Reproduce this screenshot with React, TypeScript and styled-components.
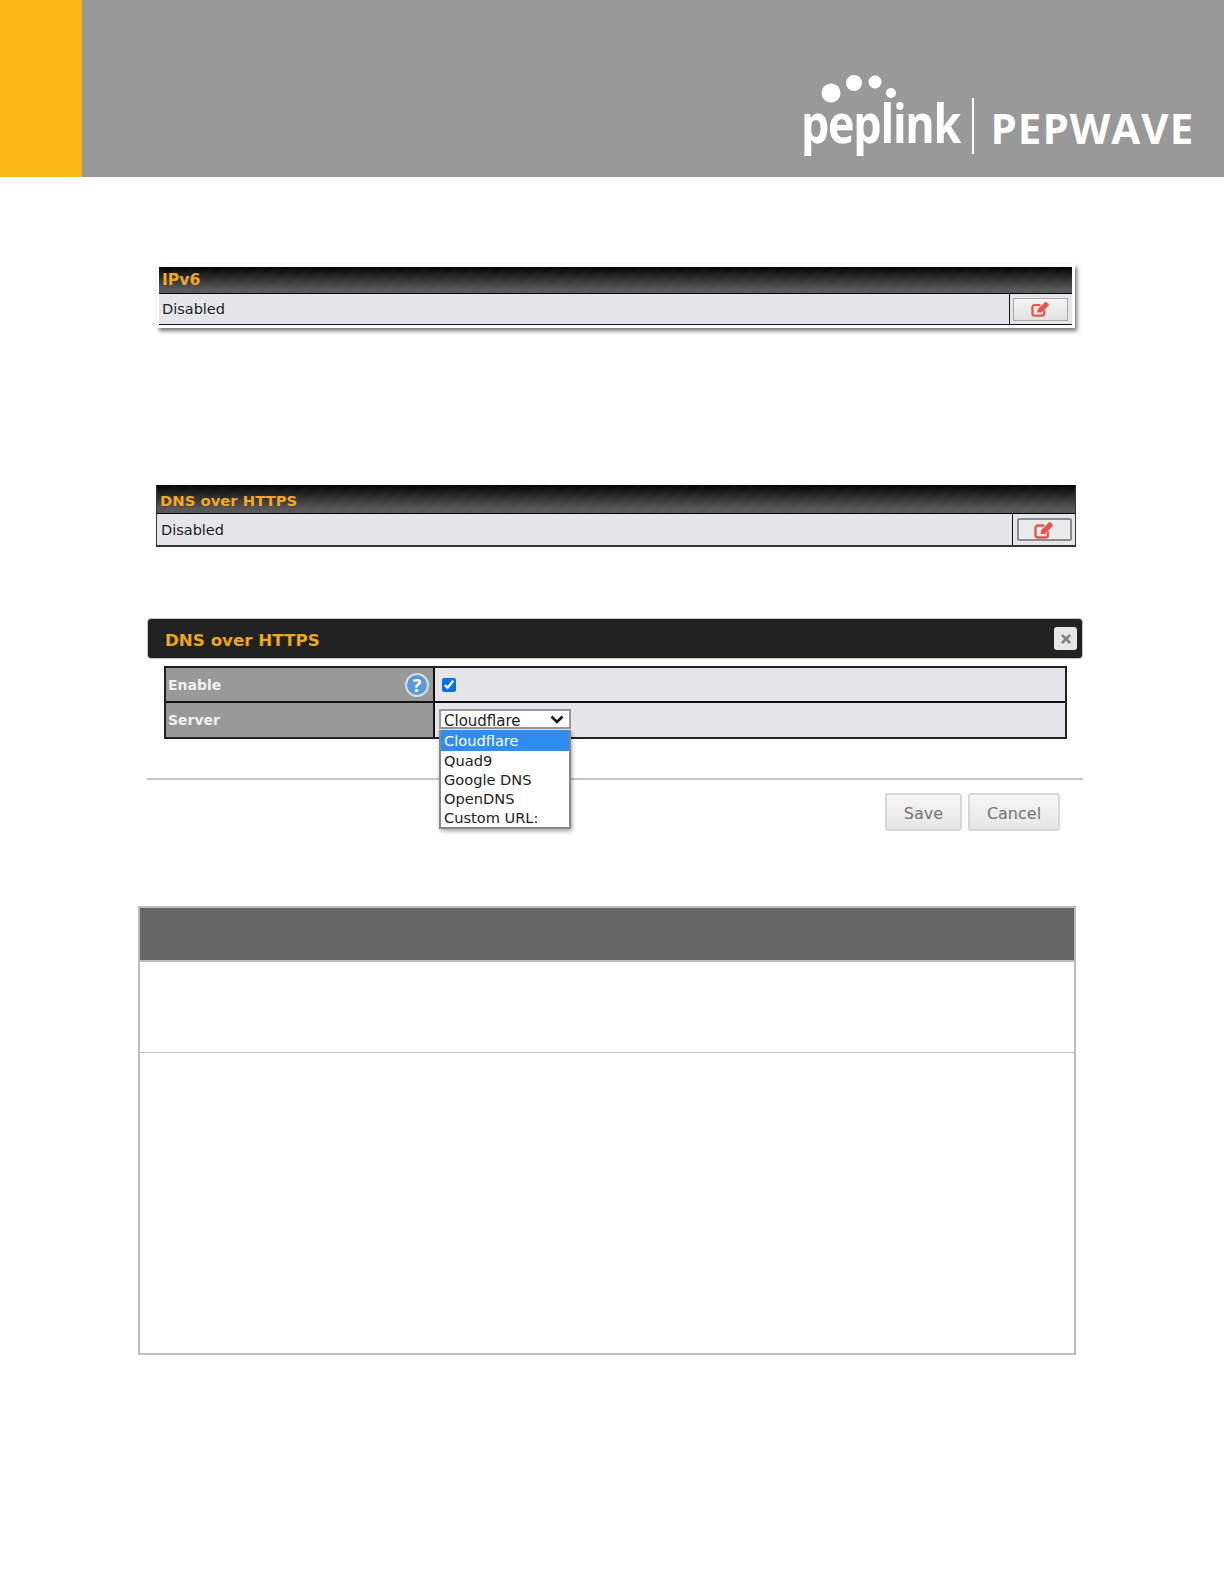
import React from 'react';
import styled, { createGlobalStyle } from 'styled-components';
import { FaTimes } from 'react-icons/fa';

const GlobalStyle = createGlobalStyle`
  html, body {
    margin: 0;
    padding: 0;
    background: #fff;
  }
  body {
    font-family: "DejaVu Sans", Verdana, sans-serif;
  }
`;

const Page = styled.div`
  width: 1224px;
  height: 1584px;
  overflow: hidden;
`;

const Banner = styled.header`
  display: flex;
  height: 177px;
  background: #999;
`;

const BannerAccent = styled.div`
  width: 82px;
  background: #ffb81c;
`;

const Logo = styled.div`
  position: relative;
  display: flex;
  align-items: flex-start;
  margin-left: auto;
  width: 421px;
  color: #fff;
`;

const LogoDots = styled.svg`
  position: absolute;
  left: 0;
  top: 70px;
`;

const PeplinkSlot = styled.div`
  width: 155px;
  margin: 82px 0 0 -2px;
`;

const PeplinkMark = styled.span`
  display: inline-block;
  font-family: "Open Sans", sans-serif;
  font-size: 54px;
  line-height: 80px;
  font-weight: 700;
  letter-spacing: -1.5px;
  white-space: nowrap;
  transform: scaleX(0.83);
  transform-origin: left center;
`;

const LogoRule = styled.div`
  width: 1.5px;
  height: 56px;
  margin: 98px 0 0 16px;
  background: #fff;
`;

const PepwaveMark = styled.span`
  margin: 98px 0 0 17px;
  font-family: "Open Sans", sans-serif;
  font-size: 42px;
  line-height: 60px;
  font-weight: 700;
  letter-spacing: 1px;
  white-space: nowrap;
`;

const ShadowFrame = styled.section`
  width: 913px;
  margin: 87px 0 0 157px;
  padding: 3px 3px 3px 2px;
  background: #fff;
  box-shadow: 2px 3px 4px #777;
`;

const PlainFrame = styled.section`
  width: 918px;
  margin: 157px 0 0 156px;
  border-left: 1px solid #333;
  border-right: 1px solid #333;
  border-bottom: 2px solid #333;
`;

const TitleBar = styled.div<{ $height: number; $drop: number; $size: number }>`
  display: flex;
  align-items: center;
  height: ${({ $height, $drop }) => $height - $drop}px;
  padding: ${({ $drop }) => $drop}px 0 0 3px;
  border-bottom: 1px solid #000;
  background:
    repeating-linear-gradient(135deg, rgba(255, 255, 255, 0.035) 0 1px, transparent 1px 2px),
    linear-gradient(#000, #555 85%);
  color: #f2a72a;
  font-size: ${({ $size }) => $size}px;
  font-weight: 700;
`;

const StatusRow = styled.div<{ $height: number }>`
  display: flex;
  height: ${({ $height }) => $height}px;
  background: #e6e6ea;
  color: #222;
  font-size: 14.5px;
`;

const StatusText = styled.div<{ $inset: number }>`
  flex: 1;
  display: flex;
  align-items: center;
  padding-left: ${({ $inset }) => $inset}px;
`;

const EditCell = styled.div<{ $width: number; $inset: number }>`
  display: flex;
  align-items: center;
  justify-content: center;
  box-sizing: border-box;
  width: ${({ $width }) => $width}px;
  padding-right: ${({ $inset }) => $inset}px;
  border-left: 1px solid #111;
`;

const EditButton = styled.div<{ $width: number; $strong?: boolean }>`
  display: flex;
  align-items: center;
  justify-content: center;
  box-sizing: border-box;
  width: ${({ $width }) => $width}px;
  height: 23px;
  border: ${({ $strong }) => ($strong ? '2px solid #8c8c8c' : '1px solid #a8a8a8')};
  border-radius: ${({ $strong }) => ($strong ? '2px' : '0')};
  background: ${({ $strong }) => ($strong ? '#ebebeb' : 'linear-gradient(#f4f4f4, #e2e2e2)')};
`;

const ClosedBottom = styled.div`
  border-bottom: 1px solid #111;
`;

const Dialog = styled.section`
  width: 936px;
  margin: 71px 0 0 147px;
`;

const DialogHead = styled.div`
  display: flex;
  align-items: center;
  justify-content: space-between;
  height: 41px;
  box-sizing: border-box;
  padding: 0 5px 0 17px;
  border: 1px solid #c4c4c4;
  border-radius: 4px;
  background: #222;
`;

const DialogTitle = styled.span`
  margin-top: 3px;
  color: #e9a820;
  font-size: 16.7px;
  font-weight: 700;
`;

const CloseButton = styled.div`
  display: flex;
  align-items: center;
  justify-content: center;
  width: 23px;
  height: 23px;
  border-radius: 3px;
  background: #e6e6e6;
  color: #808080;
  font-size: 14px;
`;

const FormTable = styled.div`
  width: 903px;
  margin: 7px 0 0 17px;
  box-sizing: border-box;
  border: 2px solid #222;
`;

const FormRow = styled.div`
  display: flex;
  height: 33px;

  & + & {
    height: 34px;
    border-top: 2px solid #111;
  }
`;

const FormLabel = styled.div`
  display: flex;
  align-items: center;
  justify-content: space-between;
  box-sizing: border-box;
  width: 269px;
  padding: 0 4px 0 2px;
  border-right: 2px solid #111;
  background: #999;
  color: #f0f0f0;
  font-size: 14px;
  font-weight: 700;
`;

const FormValue = styled.div`
  position: relative;
  flex: 1;
  display: flex;
  align-items: center;
  padding-left: 4px;
  background: #e6e6ea;
`;

const HelpIcon = styled.div`
  display: flex;
  align-items: center;
  justify-content: center;
  box-sizing: border-box;
  width: 24px;
  height: 24px;
  border: 2px solid #cfe0f2;
  border-radius: 50%;
  background: #5f97d2;
  color: #fff;
  font-family: "Open Sans", sans-serif;
  font-size: 18px;
  font-weight: 700;
`;

const Check = styled.input`
  width: 14px;
  height: 14px;
  margin: 0 0 0 3px;
  accent-color: #0b6fe8;
`;

const SelectWrap = styled.div`
  position: relative;
  margin-bottom: 3px;
`;

const ServerSelect = styled.select`
  display: block;
  width: 132px;
  height: 20px;
  padding: 3px 0 0 3px;
  border: 2px solid #999;
  border-radius: 0;
  appearance: none;
  background-color: #fff;
  color: #222;
  font-family: "DejaVu Sans", sans-serif;
  font-size: 15px;
  line-height: 15px;
`;

const Chevron = styled.svg`
  position: absolute;
  right: 7px;
  top: 6px;
`;

const OptionList = styled.ul`
  position: absolute;
  left: 4px;
  top: 27px;
  width: 132px;
  box-sizing: border-box;
  margin: 0;
  padding: 0;
  list-style: none;
  border-left: 2px solid #888;
  border-right: 2px solid #888;
  border-bottom: 2px solid #888;
  background: #fff;
  box-shadow: 1px 2px 4px rgba(0, 0, 0, 0.35);
  z-index: 2;
`;

const OptionItem = styled.li<{ $active?: boolean }>`
  height: ${({ $active }) => ($active ? 21 : 19)}px;
  padding-left: 3px;
  background: ${({ $active }) => ($active ? '#2f8cf0' : 'transparent')};
  color: ${({ $active }) => ($active ? '#fff' : '#222')};
  font-size: 14.6px;
  line-height: ${({ $active }) => ($active ? 22 : 19)}px;
  white-space: nowrap;
`;

const DialogRule = styled.div`
  height: 2px;
  margin-top: 39px;
  background: #c4c4c4;
`;

const DialogActions = styled.div`
  display: flex;
  justify-content: flex-end;
  gap: 6px;
  margin-top: 13px;
  padding-right: 23px;
`;

const ActionButton = styled.div<{ $width: number }>`
  display: flex;
  align-items: center;
  justify-content: center;
  box-sizing: border-box;
  width: ${({ $width }) => $width}px;
  height: 38px;
  padding-top: 2px;
  border: 2px solid #d8d8d8;
  border-radius: 3px;
  background: linear-gradient(#f6f6f6, #e6e6e6);
  color: #747474;
  font-size: 16px;
`;

const EmptyTable = styled.section`
  width: 938px;
  box-sizing: border-box;
  margin: 75px 0 0 138px;
  border: 2px solid #bcbcbc;
`;

const EmptyHead = styled.div`
  height: 52px;
  border-bottom: 2px solid #bcbcbc;
  background: #666;
`;

const EmptyRow = styled.div<{ $height: number }>`
  height: ${({ $height }) => $height}px;

  & + & {
    border-top: 1px solid #bcbcbc;
  }
`;

const EditIcon: React.FC<{ width: number; height: number }> = ({ width, height }) => (
  <svg width={width} height={height} viewBox="0 0 20 18" preserveAspectRatio="none">
    <path
      d="M14 10.500V14a2.500 2.500 0 0 1-2.500 2.500H4A2.500 2.500 0 0 1 1.500 14V7A2.500 2.500 0 0 1 4 4.500h6"
      fill="none"
      stroke="#e2584f"
      strokeWidth="2.400"
    />
    <path
      d="M6.500 13 L7.200 9 L15 1.200 Q15.600 .7 16.200 1.200 L18.800 3.800 Q19.300 4.400 18.800 5 L11 13 Z"
      fill="#e2584f"
    />
  </svg>
);

const servers = ['Cloudflare', 'Quad9', 'Google DNS', 'OpenDNS', 'Custom URL:'];

const App: React.FC = () => {
  return (
    <Page>
      <GlobalStyle />
      <Banner>
        <BannerAccent />
        <Logo>
          <LogoDots width="100" height="40" viewBox="0 0 100 40">
            <circle cx="28" cy="23" r="9.5" fill="#fff" />
            <circle cx="51" cy="13" r="8" fill="#fff" />
            <circle cx="72" cy="12" r="6.5" fill="#fff" />
            <circle cx="88" cy="23" r="5" fill="#fff" />
          </LogoDots>
          <PeplinkSlot>
            <PeplinkMark>peplink</PeplinkMark>
          </PeplinkSlot>
          <LogoRule />
          <PepwaveMark>PEPWAVE</PepwaveMark>
        </Logo>
      </Banner>

      <ShadowFrame>
        <TitleBar $height={26} $drop={0} $size={15.6}>IPv6</TitleBar>
        <ClosedBottom>
          <StatusRow $height={30}>
            <StatusText $inset={3}>Disabled</StatusText>
            <EditCell $width={63} $inset={2}>
              <EditButton $width={55}>
                <EditIcon width={19} height={16} />
              </EditButton>
            </EditCell>
          </StatusRow>
        </ClosedBottom>
      </ShadowFrame>

      <PlainFrame>
        <TitleBar $height={28} $drop={2} $size={14.8}>DNS over HTTPS</TitleBar>
        <StatusRow $height={31}>
          <StatusText $inset={4}>Disabled</StatusText>
          <EditCell $width={63} $inset={0}>
            <EditButton $width={55} $strong>
              <EditIcon width={20} height={18} />
            </EditButton>
          </EditCell>
        </StatusRow>
      </PlainFrame>

      <Dialog>
        <DialogHead>
          <DialogTitle>DNS over HTTPS</DialogTitle>
          <CloseButton>
            <FaTimes />
          </CloseButton>
        </DialogHead>
        <FormTable>
          <FormRow>
            <FormLabel>
              Enable
              <HelpIcon>?</HelpIcon>
            </FormLabel>
            <FormValue>
              <Check type="checkbox" defaultChecked />
            </FormValue>
          </FormRow>
          <FormRow>
            <FormLabel>Server</FormLabel>
            <FormValue>
              <SelectWrap>
                <ServerSelect defaultValue="Cloudflare">
                  {servers.map((name) => (
                    <option key={name}>{name}</option>
                  ))}
                </ServerSelect>
                <Chevron width="14" height="9" viewBox="0 0 14 9">
                  <path d="M1.500 1.500 L7 7 L12.500 1.500" fill="none" stroke="#111" strokeWidth="2.600" />
                </Chevron>
              </SelectWrap>
              <OptionList>
                {servers.map((name, i) => (
                  <OptionItem key={name} $active={i === 0}>
                    {name}
                  </OptionItem>
                ))}
              </OptionList>
            </FormValue>
          </FormRow>
        </FormTable>
        <DialogRule />
        <DialogActions>
          <ActionButton $width={77}>Save</ActionButton>
          <ActionButton $width={92}>Cancel</ActionButton>
        </DialogActions>
      </Dialog>

      <EmptyTable>
        <EmptyHead />
        <EmptyRow $height={90} />
        <EmptyRow $height={300} />
      </EmptyTable>
    </Page>
  );
};

export default App;
